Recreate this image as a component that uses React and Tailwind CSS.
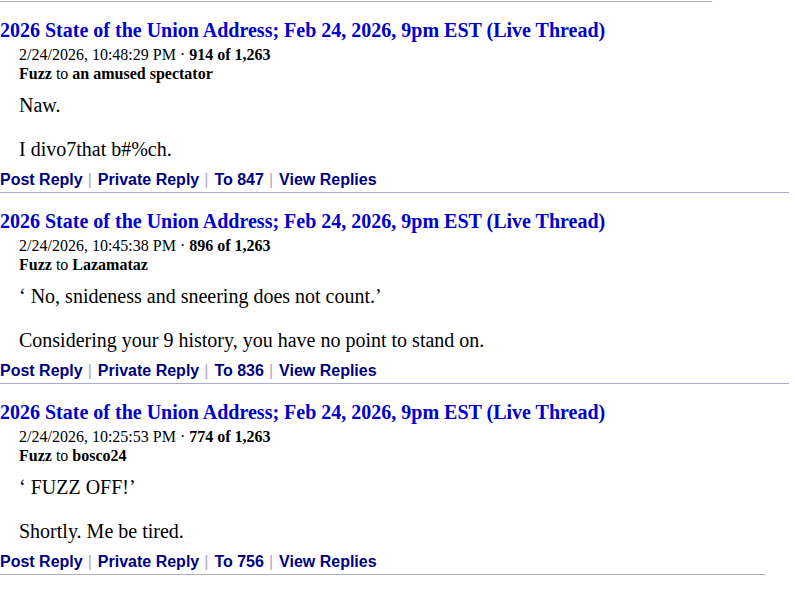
const posts = [
  {
    date: "2/24/2026, 10:48:29 PM",
    num: "914 of 1,263",
    to: "an amused spectator",
    lines: ["Naw.", "I divo7that b#%ch."],
    toNum: "847",
  },
  {
    date: "2/24/2026, 10:45:38 PM",
    num: "896 of 1,263",
    to: "Lazamataz",
    lines: ["\u2018 No, snideness and sneering does not count.\u2019", "Considering your 9 history, you have no point to stand on."],
    toNum: "836",
  },
  {
    date: "2/24/2026, 10:25:53 PM",
    num: "774 of 1,263",
    to: "bosco24",
    lines: ["\u2018 FUZZ OFF!\u2019", "Shortly. Me be tired."],
    toNum: "756",
  },
];

const rules = ["w-[789px]", "w-[789px]", "w-[765px]"];

function Sep() {
  return <span className="font-normal text-[#aab] ml-[5px] mr-[6px]">|</span>;
}

function Post({ p }) {
  return (
    <div className="h-[190px] flex flex-col">
      <h2 className="mt-[16px] text-[20px] leading-[24px] font-bold text-[#0000cc]">
        2026 State of the Union Address; Feb 24, 2026, 9pm EST (Live Thread)
      </h2>
      <div className="ml-[19px] mt-[3px] text-[16px] leading-[19px]">
        {p.date} · <b>{p.num}</b>
      </div>
      <div className="ml-[19px] text-[16px] leading-[19px]">
        <b>Fuzz</b> to <b>{p.to}</b>
      </div>
      <div className="ml-[19px] mt-[11px] text-[20px] leading-[22px] flex flex-col gap-[22px]">
        {p.lines.map((l, i) => (
          <p key={i}>{l}</p>
        ))}
      </div>
      <div className="mt-[10px] text-[16px] leading-[20px] font-bold text-[#000080] font-['Liberation_Sans',Arial,sans-serif]">
        <span>Post Reply</span>
        <Sep />
        <span>Private Reply</span>
        <Sep />
        <span>To {p.toNum}</span>
        <Sep />
        <span>View Replies</span>
      </div>
    </div>
  );
}

export default function App() {
  return (
    <div className="bg-white w-[795px] h-[591px] overflow-hidden text-black font-['Liberation_Serif','Times_New_Roman',serif] pt-[1px]">
      <div className="w-[712px] h-[1px] bg-[#aaaacc]" />
      {posts.map((p, i) => (
        <div key={i}>
          <Post p={p} />
          <div className={`${rules[i]} h-[1px] bg-[#aaaacc]`} />
        </div>
      ))}
    </div>
  );
}
